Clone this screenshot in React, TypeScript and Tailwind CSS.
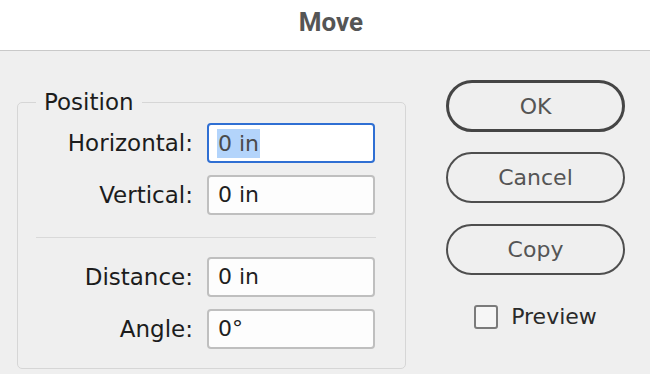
const font = { fontFamily: '"DejaVu Sans", "Noto Sans", sans-serif' };

function Field({ label, value, focused }: { label: string; value: string; focused?: boolean }) {
  return (
    <div className="flex items-center">
      <div className="w-[175px] text-right text-[23px] leading-[26px] text-[#1c1c1c]">{label}</div>
      <div
        className={
          focused
            ? 'ml-[14px] flex h-[40px] w-[168px] items-center rounded-[4px] border-2 border-[#2f6fd3] bg-white pl-[8px]'
            : 'ml-[14px] flex h-[40px] w-[168px] items-center rounded-[4px] border-2 border-[#bfbfbf] bg-[#fdfdfd] pl-[8px]'
        }
      >
        {focused ? (
          <span className="bg-[#b3d4fb] pb-[1px] pl-[1px] pr-[1px] pt-[2px] text-[22px] leading-[26px] text-[#4a4a4a]">
            {value}
          </span>
        ) : (
          <span className="pl-[1px] text-[22px] leading-[26px] text-[#1f1f1f]">{value}</span>
        )}
      </div>
    </div>
  );
}

function Button({ label, primary }: { label: string; primary?: boolean }) {
  return (
    <div
      className={
        primary
          ? 'flex h-[52px] w-[179px] items-center justify-center rounded-full border-[3px] border-[#454545] text-[22px] text-[#555]'
          : 'flex h-[51px] w-[179px] items-center justify-center rounded-full border-2 border-[#4e4e4e] text-[22px] text-[#555]'
      }
    >
      {label}
    </div>
  );
}

export default function App() {
  return (
    <div className="h-[374px] w-[650px] overflow-hidden bg-[#efefef]" style={font}>
      <div className="flex h-[51px] items-center justify-center border-b border-[#c9c9c9] bg-white pb-[6px] pl-[12px]">
        <span
          className="text-[26px] font-bold text-[#555]"
          style={{ fontFamily: 'Roboto, "Liberation Sans", sans-serif' }}
        >
          Move
        </span>
      </div>

      <div className="flex">
        <fieldset className="ml-[17px] mt-[38px] h-fit w-[389px] rounded-[5px] border border-[#d6d6d6] pb-[19px]">
          <legend className="ml-[18px] px-2 text-[23px] leading-[26px] text-[#1c1c1c]">Position</legend>
          <div className="flex flex-col gap-3 pt-2">
            <Field label="Horizontal:" value="0 in" focused />
            <Field label="Vertical:" value="0 in" />
          </div>
          <div className="mb-[19px] ml-[18px] mt-[22px] h-px w-[340px] bg-[#d9d9d9]" />
          <div className="flex flex-col gap-3">
            <Field label="Distance:" value="0 in" />
            <Field label="Angle:" value="0°" />
          </div>
        </fieldset>

        <div className="ml-auto mr-[25px] mt-[29px] flex w-[179px] flex-col items-center">
          <Button label="OK" primary />
          <div className="mt-[20px]">
            <Button label="Cancel" />
          </div>
          <div className="mt-[21px]">
            <Button label="Copy" />
          </div>
          <div className="mt-[29px] flex items-center gap-[13px]">
            <div className="h-[24px] w-[24px] rounded-[3px] border-2 border-[#7b7b7b] bg-[#f6f6f6]" />
            <span className="text-[22px] leading-[26px] text-[#2a2a2a]">Preview</span>
          </div>
        </div>
      </div>
    </div>
  );
}
